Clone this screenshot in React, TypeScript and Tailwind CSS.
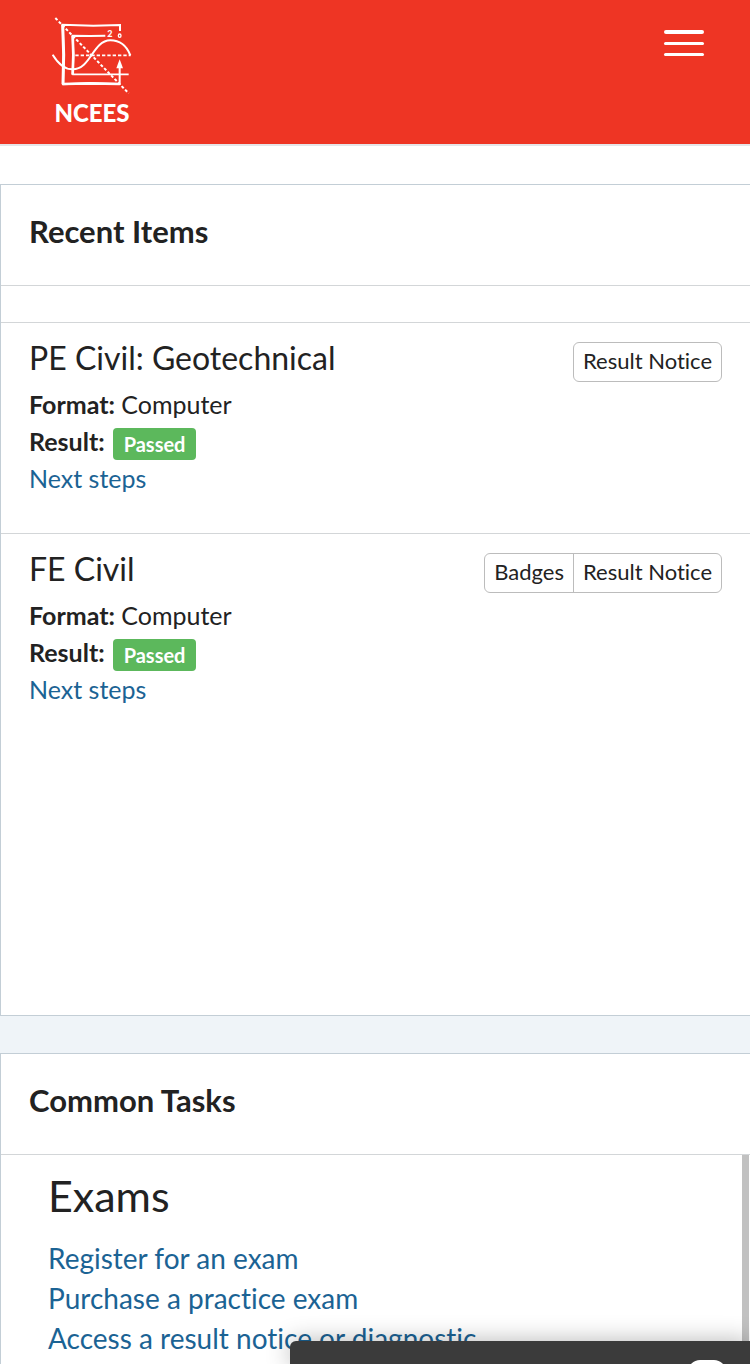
import { ReactNode } from "react";

type ExamItem = {
  title: string;
  format: string;
  result: string;
  actions: string[];
};

const recentItems: ExamItem[] = [
  { title: "PE Civil: Geotechnical", format: "Computer", result: "Passed", actions: ["Result Notice"] },
  { title: "FE Civil", format: "Computer", result: "Passed", actions: ["Badges", "Result Notice"] },
];

const examLinks = ["Register for an exam", "Purchase a practice exam", "Access a result notice or diagnostic"];

function Logo() {
  return (
    <a href="#" className="flex w-20 flex-col items-center text-white">
      <svg viewBox="36 24 240 240" className="size-20" fill="none" stroke="currentColor" aria-hidden="true">
        <path d="M240 69V51L160 53L68 50L71 140L69 229L150 226L239 228V178" strokeWidth="6" />
        <path d="M68 49L71 140L69 229" strokeWidth="9" />
        <path d="M69 228L150 226L239 228" strokeWidth="8" />
        <path d="M196 83L150 84L98 83L100 140L98 200" strokeWidth="6" />
        <path d="M98 83L100 140L98 200" strokeWidth="8" />
        <path d="M97 199H266" strokeWidth="5" />
        <path d="M46 30L266 256" strokeWidth="6" strokeDasharray="9 6" />
        <path d="M106 142H272" strokeWidth="5" strokeDasharray="10 6" />
        <path d="M38 140C56 170 76 184 98 184C153 184 157 98 211 97C240 97 260 114 271 142" strokeWidth="6" />
        <path d="M239 154L229 181H249Z" fill="currentColor" stroke="none" />
        <ellipse cx="239" cy="83" rx="4" ry="5" strokeWidth="4" />
        <text x="202" y="88" fill="currentColor" stroke="none" fontSize="27" fontWeight="900">
          2
        </text>
      </svg>
      <span className="text-2xl leading-[34px] font-black">NCEES</span>
    </a>
  );
}

function Panel({ title, className, children }: { title: string; className: string; children: ReactNode }) {
  return (
    <section className={`flex flex-col border-t border-l border-[#c3ced6] bg-white ${className}`}>
      <h2 className="shrink-0 border-b border-[#d3d6d8] px-7 pt-[26px] pb-[34px] text-[31px] leading-10 font-bold">{title}</h2>
      {children}
    </section>
  );
}

function RecentItem({ item }: { item: ExamItem }) {
  return (
    <li className="flex h-[211px] items-start justify-between border-t border-[#d3d6d8] px-7 pt-[19px]">
      <div className="text-[25px] leading-9">
        <h3 className="mb-3 text-[32px] leading-8">{item.title}</h3>
        <p>
          <b>Format:</b> {item.format}
        </p>
        <p className="flex items-center gap-2">
          <b>Result:</b>
          <span className="mt-1.5 rounded bg-[#5cb85c] px-[11px] text-xl leading-8 font-bold text-white">{item.result}</span>
        </p>
        <a href="#" className="text-[#1b6394]">
          Next steps
        </a>
      </div>
      <div className="flex divide-x divide-[#bcbcbc] rounded-md border border-[#bcbcbc]">
        {item.actions.map((action) => (
          <button key={action} type="button" className="px-[9px] pb-0.5 text-[22px] leading-9">
            {action}
          </button>
        ))}
      </div>
    </li>
  );
}

export default function App() {
  return (
    <div className="flex h-screen flex-col overflow-hidden bg-[#eff4f8] font-['Lato','Open_Sans',sans-serif] text-[#222222] [font-variant-ligatures:no-common-ligatures]">
      {/* Header */}
      <header className="flex h-[146px] shrink-0 items-start justify-between border-b-2 border-[#e5e5e8] bg-[#ee3524] pt-4 pr-[46px] pl-[52px]">
        <Logo />
        <button type="button" aria-label="Menu" className="mt-[14px] flex w-10 flex-col gap-2">
          <span className="h-1 rounded-sm bg-white" />
          <span className="h-[3px] rounded-sm bg-white" />
          <span className="h-[3px] rounded-sm bg-white" />
        </button>
      </header>

      <main className="flex min-h-0 flex-1 flex-col">
        <div className="h-[38px] shrink-0 bg-white" />

        {/* Recent Items */}
        <Panel title="Recent Items" className="h-[832px] shrink-0 border-b">
          <ul className="mt-9">
            {recentItems.map((item) => (
              <RecentItem key={item.title} item={item} />
            ))}
          </ul>
        </Panel>

        {/* Common Tasks */}
        <Panel title="Common Tasks" className="mt-[37px] min-h-0 flex-1">
          <div className="flex min-h-0 flex-1 justify-between pr-px">
            <div className="px-[47px] pt-[13px]">
              <h3 className="mb-[14px] text-[43px] leading-14">Exams</h3>
              <ul className="text-[28px] leading-10">
                {examLinks.map((link) => (
                  <li key={link}>
                    <a href="#" className="text-[#1b6394]">
                      {link}
                    </a>
                  </li>
                ))}
              </ul>
            </div>
            <div className="w-[7px] bg-[#c1c1c1]" />
          </div>
        </Panel>
      </main>

      {/* Chat bar */}
      <aside className="fixed right-0 bottom-0 flex h-[23px] w-[460px] items-start justify-end overflow-hidden rounded-tl-md bg-[#3b3b3b] pt-[19px] pr-6 shadow-[0_0_24px_rgba(0,0,0,0.3)]">
        <button type="button" aria-label="Open chat" className="h-9 w-[38px] shrink-0 rounded-xl bg-white" />
      </aside>
    </div>
  );
}
